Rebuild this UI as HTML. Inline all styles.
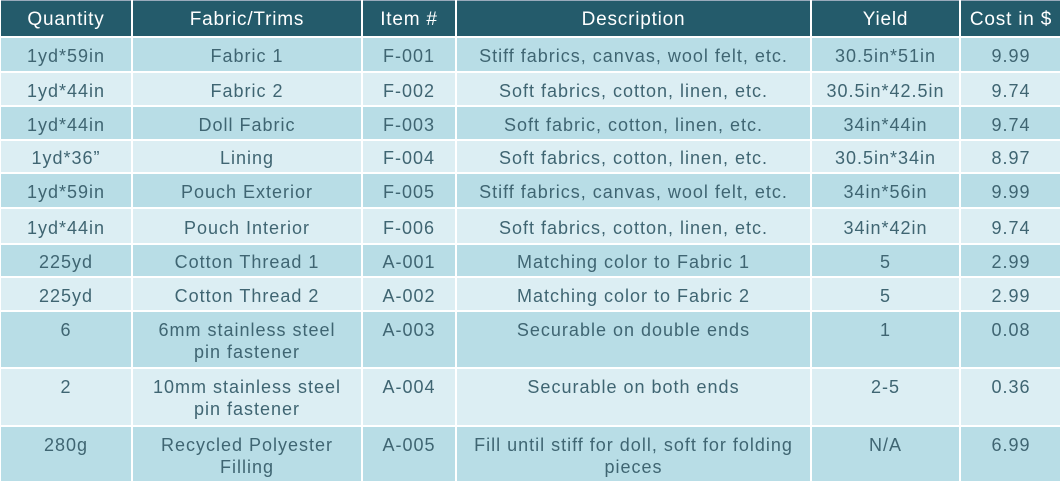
<!DOCTYPE html>
<html><head><meta charset="utf-8"><style>
body{margin:0;width:1060px;height:483px;overflow:hidden;background:#fff;font-family:"Liberation Sans","DejaVu Sans",sans-serif}
table{border-collapse:collapse;table-layout:fixed;width:1062px;position:absolute;left:-1px;top:0}
td,th{border:2px solid #fff;text-align:center;color:#3f6572;font-size:18px;letter-spacing:1px;font-weight:normal;padding:3px 2px 0;line-height:22px;vertical-align:middle;white-space:nowrap}
th{background:#245b6b;color:#fff;height:32px;border-top:1px solid #9ab;font-size:19px;letter-spacing:0.8px}
tr.d td{background:#b8dde6}
tr.l td{background:#dceef3}
tr.m td{vertical-align:top;padding-top:7px}
</style></head><body>
<table>
<colgroup><col style="width:132px"><col style="width:230px"><col style="width:94px"><col style="width:355px"><col style="width:149px"><col style="width:102px"></colgroup>
<tr><th>Quantity</th><th>Fabric/Trims</th><th>Item #</th><th>Description</th><th>Yield</th><th>Cost in $</th></tr>
<tr class="d" style="height:35px"><td>1yd*59in</td><td>Fabric 1</td><td>F-001</td><td>Stiff fabrics, canvas, wool felt, etc.</td><td>30.5in*51in</td><td>9.99</td></tr>
<tr class="l" style="height:34px"><td>1yd*44in</td><td>Fabric 2</td><td>F-002</td><td>Soft fabrics, cotton, linen, etc.</td><td>30.5in*42.5in</td><td>9.74</td></tr>
<tr class="d" style="height:34px"><td>1yd*44in</td><td>Doll Fabric</td><td>F-003</td><td>Soft fabric, cotton, linen, etc.</td><td>34in*44in</td><td>9.74</td></tr>
<tr class="l" style="height:33px"><td>1yd*36”</td><td>Lining</td><td>F-004</td><td>Soft fabrics, cotton, linen, etc.</td><td>30.5in*34in</td><td>8.97</td></tr>
<tr class="d" style="height:35px"><td>1yd*59in</td><td>Pouch Exterior</td><td>F-005</td><td>Stiff fabrics, canvas, wool felt, etc.</td><td>34in*56in</td><td>9.99</td></tr>
<tr class="l" style="height:36px"><td>1yd*44in</td><td>Pouch Interior</td><td>F-006</td><td>Soft fabrics, cotton, linen, etc.</td><td>34in*42in</td><td>9.74</td></tr>
<tr class="d" style="height:33px"><td>225yd</td><td>Cotton Thread 1</td><td>A-001</td><td>Matching color to Fabric 1</td><td>5</td><td>2.99</td></tr>
<tr class="l" style="height:34px"><td>225yd</td><td>Cotton Thread 2</td><td>A-002</td><td>Matching color to Fabric 2</td><td>5</td><td>2.99</td></tr>
<tr class="d m" style="height:57px"><td>6</td><td>6mm stainless steel<br>pin fastener</td><td>A-003</td><td>Securable on double ends</td><td>1</td><td>0.08</td></tr>
<tr class="l m" style="height:58px"><td>2</td><td>10mm stainless steel<br>pin fastener</td><td>A-004</td><td>Securable on both ends</td><td>2-5</td><td>0.36</td></tr>
<tr class="d m" style="height:56px"><td>280g</td><td>Recycled Polyester<br>Filling</td><td>A-005</td><td>Fill until stiff for doll, soft for folding<br>pieces</td><td>N/A</td><td>6.99</td></tr>
</table>
</body></html>
